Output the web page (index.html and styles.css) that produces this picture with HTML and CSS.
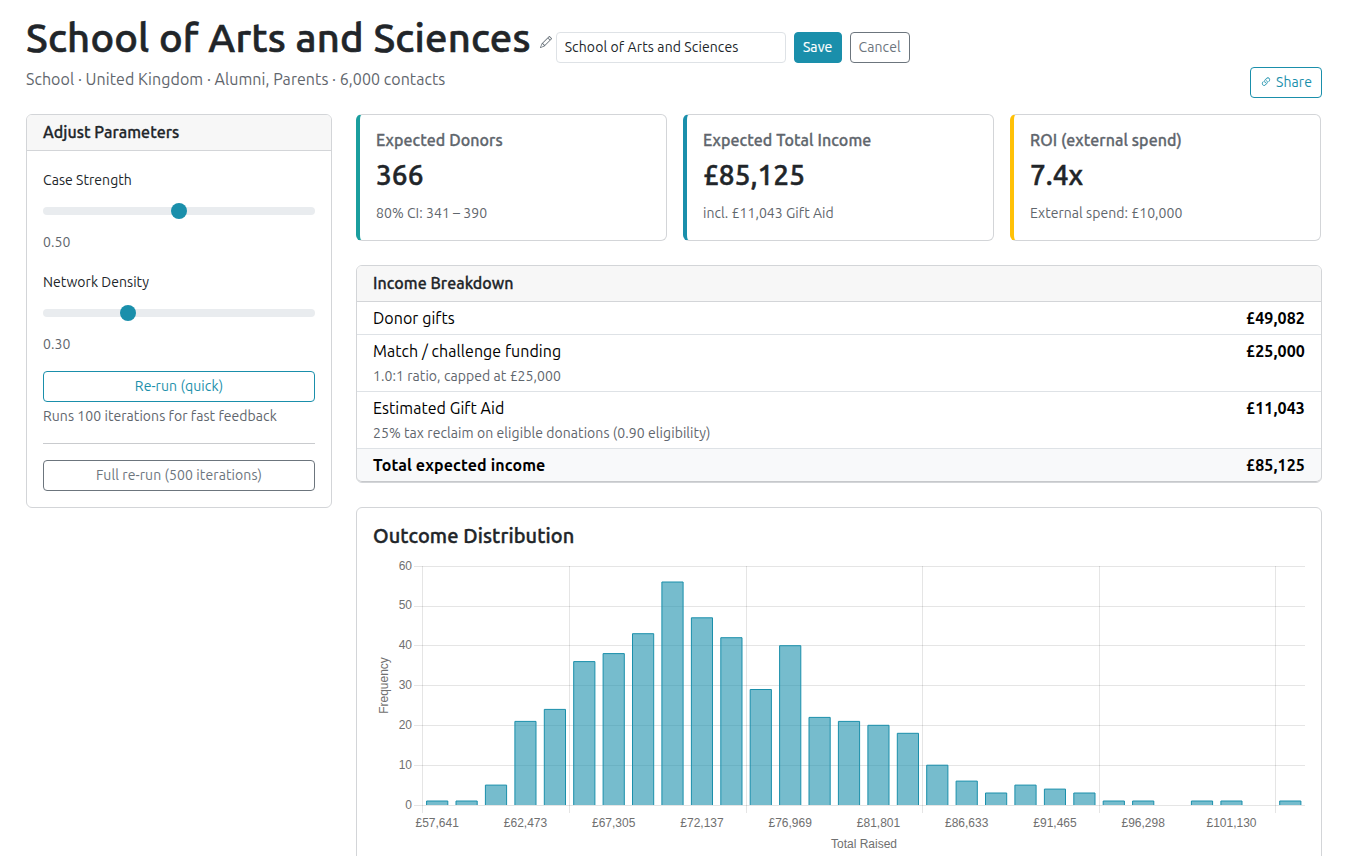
FILE: index.html
```html
<!DOCTYPE html>
<html lang="en">
<head>
<meta charset="utf-8">
<title>School of Arts and Sciences</title>
<link rel="stylesheet" href="styles.css">
</head>
<body>
<div class="page">
  <header class="page-head">
    <div class="head-main">
      <div class="title-row">
        <h1 class="title">School of Arts and Sciences</h1>
        <svg class="pencil" viewBox="0 0 16 16" aria-hidden="true"><path d="M12.146.146a.5.5 0 0 1 .708 0l3 3a.5.5 0 0 1 0 .708l-10 10a.5.5 0 0 1-.168.11l-5 2a.5.5 0 0 1-.65-.65l2-5a.5.5 0 0 1 .11-.168zM11.207 2.5 13.5 4.793 14.793 3.5 12.5 1.207zm1.586 3L10.5 3.207 4 9.707V10h.5a.5.5 0 0 1 .5.5v.5h.5a.5.5 0 0 1 .5.5v.5h.293zm-9.761 5.175-.106.106-1.528 3.821 3.821-1.528.106-.106A.5.5 0 0 1 5 12.5V12h-.5a.5.5 0 0 1-.5-.5V11h-.5a.5.5 0 0 1-.468-.325"/></svg>
        <input class="name-input" type="text" value="School of Arts and Sciences">
        <button class="btn btn-save">Save</button>
        <button class="btn btn-cancel">Cancel</button>
      </div>
      <p class="subtitle">School · United Kingdom · Alumni, Parents · 6,000 contacts</p>
    </div>
    <button class="btn btn-share"><svg class="link-icon" viewBox="0 0 16 16" aria-hidden="true"><path d="M4.715 6.542 3.343 7.914a3 3 0 1 0 4.243 4.243l1.828-1.829A3 3 0 0 0 8.586 5.5L8 6.086a1 1 0 0 0-.154.199 2 2 0 0 1 .861 3.337L6.88 11.45a2 2 0 1 1-2.83-2.83l.793-.792a4 4 0 0 1-.128-1.287z"/><path d="M6.586 4.672A3 3 0 0 0 7.414 9.5l.775-.776a2 2 0 0 1-.896-3.346L9.12 3.55a2 2 0 1 1 2.83 2.83l-.793.792c.112.42.155.855.128 1.287l1.372-1.372a3 3 0 1 0-4.243-4.243z"/></svg>Share</button>
  </header>

  <div class="layout">
    <aside class="card params">
      <div class="card-head">Adjust Parameters</div>
      <div class="params-body">
        <label class="param-label">Case Strength</label>
        <input class="slider" type="range" min="0" max="1" step="0.01" value="0.5">
        <div class="param-value">0.50</div>
        <label class="param-label">Network Density</label>
        <input class="slider" type="range" min="0" max="1" step="0.01" value="0.3">
        <div class="param-value">0.30</div>
        <button class="btn btn-quick">Re-run (quick)</button>
        <div class="hint">Runs 100 iterations for fast feedback</div>
        <hr class="rule">
        <button class="btn btn-full">Full re-run (500 iterations)</button>
      </div>
    </aside>

    <main class="content">
      <section class="metrics">
        <div class="card metric metric-teal">
          <div class="metric-label">Expected Donors</div>
          <div class="metric-value">366</div>
          <div class="metric-sub">80% CI: 341 – 390</div>
        </div>
        <div class="card metric metric-blue">
          <div class="metric-label">Expected Total Income</div>
          <div class="metric-value">£85,125</div>
          <div class="metric-sub">incl. £11,043 Gift Aid</div>
        </div>
        <div class="card metric metric-yellow">
          <div class="metric-label">ROI (external spend)</div>
          <div class="metric-value">7.4x</div>
          <div class="metric-sub">External spend: £10,000</div>
        </div>
      </section>

      <section class="card income">
        <div class="card-head">Income Breakdown</div>
        <div class="row">
          <div class="row-line"><span>Donor gifts</span><strong>£49,082</strong></div>
        </div>
        <div class="row">
          <div class="row-line"><span>Match / challenge funding</span><strong>£25,000</strong></div>
          <div class="row-note">1.0:1 ratio, capped at £25,000</div>
        </div>
        <div class="row">
          <div class="row-line"><span>Estimated Gift Aid</span><strong>£11,043</strong></div>
          <div class="row-note">25% tax reclaim on eligible donations (0.90 eligibility)</div>
        </div>
        <div class="row row-total">
          <div class="row-line"><strong>Total expected income</strong><strong>£85,125</strong></div>
        </div>
      </section>

      <section class="card chart-card">
        <h2 class="chart-title">Outcome Distribution</h2>
        <svg class="chart" viewBox="373 556 932 300" role="img" aria-label="Outcome distribution histogram">
          <g class="grid">
            <path d="M414 566.5H1305M414 606.5H1305M414 645.5H1305M414 685.5H1305M414 725.5H1305M414 765.5H1305M414 805.5H1305"/>
            <path d="M422.5 566V813M569.5 566V813M746.5 566V813M922.5 566V813M1099.5 566V813M1275.5 566V813"/>
          </g>
          <g class="bars">
            <path d="M426.6 805V801H447.8V805"/>
            <path d="M456 805V801H477.2V805"/>
            <path d="M485.4 805V785.1H506.6V805"/>
            <path d="M514.9 805V721.4H536V805"/>
            <path d="M544.3 805V709.4H565.5V805"/>
            <path d="M573.7 805V661.6H594.9V805"/>
            <path d="M603.1 805V653.6H624.3V805"/>
            <path d="M632.5 805V633.7H653.7V805"/>
            <path d="M661.9 805V582H683.1V805"/>
            <path d="M691.4 805V617.8H712.5V805"/>
            <path d="M720.8 805V637.7H742V805"/>
            <path d="M750.2 805V689.5H771.4V805"/>
            <path d="M779.6 805V645.7H800.8V805"/>
            <path d="M809 805V717.4H830.2V805"/>
            <path d="M838.4 805V721.4H859.6V805"/>
            <path d="M867.9 805V725.3H889V805"/>
            <path d="M897.3 805V733.3H918.5V805"/>
            <path d="M926.7 805V765.2H947.9V805"/>
            <path d="M956.1 805V781.1H977.3V805"/>
            <path d="M985.5 805V793H1006.7V805"/>
            <path d="M1014.9 805V785.1H1036.1V805"/>
            <path d="M1044.4 805V789.1H1065.5V805"/>
            <path d="M1073.8 805V793H1095V805"/>
            <path d="M1103.2 805V801H1124.4V805"/>
            <path d="M1132.6 805V801H1153.8V805"/>
            <path d="M1191.4 805V801H1212.6V805"/>
            <path d="M1220.9 805V801H1242V805"/>
            <path d="M1279.7 805V801H1300.9V805"/>
          </g>
          <g class="ticks-y">
            <text x="412" y="570">60</text>
            <text x="412" y="609">50</text>
            <text x="412" y="649">40</text>
            <text x="412" y="689">30</text>
            <text x="412" y="729">20</text>
            <text x="412" y="769">10</text>
            <text x="412" y="809">0</text>
          </g>
          <g class="ticks-x">
            <text x="437.2" y="827">£57,641</text>
            <text x="525.5" y="827">£62,473</text>
            <text x="613.7" y="827">£67,305</text>
            <text x="702" y="827">£72,137</text>
            <text x="790.2" y="827">£76,969</text>
            <text x="878.5" y="827">£81,801</text>
            <text x="966.7" y="827">£86,633</text>
            <text x="1055" y="827">£91,465</text>
            <text x="1143.2" y="827">£96,298</text>
            <text x="1231.5" y="827">£101,130</text>
          </g>
          <text class="axis-title" x="864" y="848">Total Raised</text>
          <text class="axis-title" transform="translate(388 685.5) rotate(-90)">Frequency</text>
        </svg>
      </section>
    </main>
  </div>
</div>
</body>
</html>
```

FILE: styles.css
```css
* { box-sizing: border-box; }

html, body { margin: 0; height: 856px; overflow: hidden; }

body {
  background: #fff;
  color: #212529;
  font-family: Ubuntu, "Noto Sans", sans-serif;
  font-size: 16px;
  line-height: 24px;
  letter-spacing: 0.05px;
}

.page { padding: 14px 36px 0 26px; }

.page-head {
  display: flex;
  justify-content: space-between;
  align-items: flex-end;
  margin-bottom: 16px;
}

.title-row { display: flex; align-items: flex-end; height: 49px; }

.title {
  margin: 0 0 1px;
  font-size: 40px;
  font-weight: 500;
  line-height: 48px;
  letter-spacing: 0.18px;
  -webkit-text-stroke: 0.6px #212529;
}

.pencil { width: 12px; height: 12px; margin: 0 4px 15px 9px; fill: #6c757d; }

.name-input {
  width: 230px;
  height: 31px;
  padding: 3px 8px 5px;
  border: 1px solid #dee2e6;
  border-radius: 4px;
  color: #212529;
  font: 14px/21px Ubuntu, "Noto Sans", sans-serif;
  letter-spacing: 0.11px;
}

.subtitle { margin: 4px 0 7px; color: #5f666d; }

.btn {
  height: 31px;
  padding: 0 0 1px;
  border: 1px solid #6c757d;
  border-radius: 4px;
  background: #fff;
  color: #6c757d;
  font: 14px/21px Ubuntu, "Noto Sans", sans-serif;
  letter-spacing: 0.1px;
}

.btn-save {
  width: 48px;
  margin-left: 8px;
  border-color: #1a8fab;
  background: #1a8fab;
  color: #fff;
  -webkit-text-stroke: 0.2px #fff;
}

.btn-cancel { width: 60px; margin-left: 8px; }

.btn-share {
  display: flex;
  align-items: center;
  justify-content: center;
  width: 72px;
  border-color: #1a8fab;
  color: #1a8fab;
}

.link-icon { width: 12px; height: 12px; margin-right: 4px; fill: #1a8fab; }

.layout {
  display: grid;
  grid-template-columns: 306px 966px;
  gap: 24px;
  align-items: start;
}

.card {
  border: 1px solid #d3d5d8;
  border-radius: 6px;
  background: #fff;
}

.card-head {
  height: 36px;
  padding: 5px 16px;
  border-bottom: 1px solid #d3d5d8;
  border-radius: 5px 5px 0 0;
  background: #f7f7f7;
  font-weight: 500;
  -webkit-text-stroke: 0.3px #212529;
}

.params-body { display: flex; flex-direction: column; padding: 19px 16px 16px; }

.param-label { font-size: 14px; line-height: 21px; margin-bottom: 12px; }

.param-value + .param-label { margin-top: 3px; }

.slider {
  -webkit-appearance: none;
  appearance: none;
  width: 100%;
  height: 16px;
  margin: 0 0 8px;
  background: transparent;
}

.slider::-webkit-slider-runnable-track {
  height: 8px;
  border-radius: 4px;
  background: #e9ecef;
}

.slider::-webkit-slider-thumb {
  -webkit-appearance: none;
  width: 16px;
  height: 16px;
  margin-top: -4px;
  border-radius: 50%;
  background: #1a8fab;
}

.param-value {
  margin: 5px 0 16px;
  color: #5f666d;
  font-size: 14px;
  line-height: 21px;
}

.btn-quick { width: 100%; border-color: #1a8fab; color: #1a8fab; }

.hint { margin-top: 4px; color: #5f666d; font-size: 14px; line-height: 21px; letter-spacing: 0.06px; }

.rule {
  width: 100%;
  margin: 16px 0;
  border: 0;
  border-top: 1px solid #c9cbce;
}

.btn-full { width: 100%; }

.content { display: flex; flex-direction: column; gap: 24px; }

.metrics { display: flex; gap: 16px; }

.metric {
  flex: 0 0 311px;
  height: 127px;
  padding: 13px 16px 0 16px;
  border-left-width: 4px;
}

.metric-teal { border-left-color: #1a9e9e; }
.metric-blue { border-left-color: #1a8fab; }
.metric-yellow { border-left-color: #ffc107; }

.metric-label { color: #5f666d; font-weight: 500; letter-spacing: 0.08px; -webkit-text-stroke: 0.3px #5f666d; }

.metric-value {
  margin-top: 5px;
  font-size: 28px;
  font-weight: 500;
  line-height: 36px;
  -webkit-text-stroke: 0.5px #212529;
}

.metric-sub { margin-top: 10px; color: #5f666d; font-size: 14px; line-height: 21px; }

.row { padding: 4px 16px; border-bottom: 1px solid #dee2e6; }

.row:last-child { border-bottom: 1px solid #c6c8cb; border-radius: 0 0 5px 5px; }

.row-line { display: flex; justify-content: space-between; color: #000; }

.row-note { margin-top: 3px; color: #5f666d; font-size: 14px; line-height: 21px; letter-spacing: 0.07px; }

.row-total { background: #f8f9fa; }

.row strong { font-weight: 700; letter-spacing: 0.12px; }

.chart-card { height: 380px; padding: 16px; }

.chart-title {
  margin: 0 0 8px;
  font-size: 20px;
  font-weight: 500;
  line-height: 24px;
  letter-spacing: 0.1px;
  -webkit-text-stroke: 0.4px #212529;
}

.chart { display: block; width: 932px; height: 300px; font-family: "Liberation Sans", sans-serif; font-size: 12px; letter-spacing: 0; }

.grid path { fill: none; stroke: rgba(0, 0, 0, 0.1); stroke-width: 1; }

.bars path { fill: rgba(26, 143, 171, 0.6); stroke: #1a8fab; stroke-width: 1; }

.ticks-y text { fill: #707070; text-anchor: end; }

.ticks-x text { fill: #707070; text-anchor: middle; }

.axis-title { fill: #707070; text-anchor: middle; }
```
